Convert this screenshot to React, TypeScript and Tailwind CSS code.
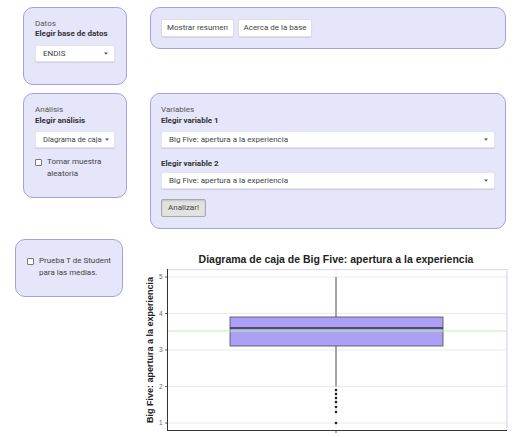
import React from "react";

const font = { fontFamily: "Roboto, 'Liberation Sans', sans-serif" };

function Caret() {
  return (
    <svg width="4" height="3" viewBox="0 0 4 3" className="shrink-0">
      <path d="M0 0.5 L4 0.5 L2 2.8 Z" fill="#555" />
    </svg>
  );
}

function Select({ value, w, size = "text-[8px]" }: { value: string; w: string; size?: string }) {
  return (
    <div
      className={`${w} ${size} h-[17px] bg-white border border-[#e4e4ec] rounded-[2px] shadow-[0_1px_1px_rgba(0,0,0,0.1)] flex items-center justify-between gap-[3px] pl-[7px] pr-[6px] text-[#444] whitespace-nowrap`}
    >
      <span>{value}</span>
      <Caret />
    </div>
  );
}

function Check({ lines }: { lines: string[] }) {
  return (
    <div className="flex items-start gap-[5px] text-[8px] leading-[12px] text-[#444]">
      <div className="mt-[3px] w-[7px] h-[7px] border border-[#777] rounded-[1px] bg-white shrink-0" />
      <div>
        {lines.map((l) => (
          <div key={l}>{l}</div>
        ))}
      </div>
    </div>
  );
}

function Panel({ className, children }: { className: string; children: React.ReactNode }) {
  return (
    <div className={`bg-[#e6e6fa] border border-[#a99de6] rounded-[10px] ${className}`}>
      {children}
    </div>
  );
}

function BoxPlot() {
  const ys = [
    { v: 5, y: 38 },
    { v: 4, y: 74.5 },
    { v: 3, y: 111 },
    { v: 2, y: 147.5 },
    { v: 1, y: 184 },
  ];
  const outliers = [151, 155, 159, 163, 168, 173, 184];
  return (
    <svg width="375" height="197" viewBox="0 0 375 197" className="block">
      <text
        x="196"
        y="24"
        textAnchor="middle"
        fontFamily="'Liberation Sans', Arial, sans-serif"
        fontWeight="bold"
        fontSize="10.5"
        fill="#222"
      >
        Diagrama de caja de Big Five: apertura a la experiencia
      </text>
      {ys.map((t) => (
        <line key={t.v} x1="27" x2="367" y1={t.y} y2={t.y} stroke="#ebebeb" strokeWidth="1" />
      ))}
      <line x1="196" x2="196" y1="30" y2="191" stroke="#ebebeb" strokeWidth="1" />
      <line x1="27" x2="367" y1="30.5" y2="30.5" stroke="#d9d6fb" strokeWidth="1" />
      <line x1="367" x2="367" y1="30" y2="191" stroke="#d9d6fb" strokeWidth="1.2" />
      <line x1="196" x2="196" y1="38" y2="78" stroke="#444" strokeWidth="0.9" />
      <line x1="196" x2="196" y1="107" y2="147.5" stroke="#444" strokeWidth="0.9" />
      <rect x="90" y="78" width="213" height="29" fill="#ab9ff6" stroke="#5a5a6a" strokeWidth="0.9" />
      <line x1="90" x2="303" y1="89" y2="89" stroke="#333" strokeWidth="1.5" />
      <line x1="27" x2="367" y1="92" y2="92" stroke="#b9f3a2" strokeWidth="1" />
      {outliers.map((y, i) => (
        <circle key={i} cx="196" cy={y} r="1.3" fill="#222" />
      ))}
      <line x1="27.5" x2="27.5" y1="30" y2="191" stroke="#333" strokeWidth="1" />
      <line x1="27" x2="367" y1="191.5" y2="191.5" stroke="#333" strokeWidth="1" />
      {ys.map((t) => (
        <g key={"t" + t.v}>
          <line x1="25" x2="27" y1={t.y} y2={t.y} stroke="#333" strokeWidth="0.8" />
          <text
            x="22.5"
            y={t.y + 2.4}
            textAnchor="end"
            fontFamily="'Liberation Sans', Arial, sans-serif"
            fontSize="6.5"
            fill="#666"
          >
            {t.v}
          </text>
        </g>
      ))}
      <line x1="196" x2="196" y1="191" y2="194" stroke="#333" strokeWidth="0.8" />
      <text
        x="0"
        y="0"
        transform="translate(12.5 111) rotate(-90)"
        textAnchor="middle"
        fontFamily="'Liberation Sans', Arial, sans-serif"
        fontWeight="bold"
        fontSize="9"
        fill="#222"
      >
        Big Five: apertura a la experiencia
      </text>
    </svg>
  );
}

export default function App() {
  return (
    <div className="w-[515px] h-[437px] bg-white overflow-hidden" style={font}>
      <div className="flex items-start pt-[7px]">
        <Panel className="ml-[23px] w-[104px] h-[78px] pl-[11px] pt-[11px]">
          <div className="text-[8px] leading-[10px] text-[#555]">Datos</div>
          <div className="text-[8px] leading-[10px] font-bold text-[#333]">Elegir base de datos</div>
          <div className="mt-[6px]">
            <Select value="ENDIS" w="w-[80px]" />
          </div>
        </Panel>
        <Panel className="ml-[23px] w-[356px] h-[42px] pl-[10px] pt-[11px] flex items-start gap-[4px]">
          <div className="w-[73px] h-[18px] bg-white border border-[#ddd] rounded-[2px] shadow-[0_1px_1px_rgba(0,0,0,0.08)] flex items-center justify-center text-[8px] text-[#444]">
            Mostrar resumen
          </div>
          <div className="w-[74px] h-[18px] bg-white border border-[#ddd] rounded-[2px] shadow-[0_1px_1px_rgba(0,0,0,0.08)] flex items-center justify-center text-[8px] text-[#444]">
            Acerca de la base
          </div>
        </Panel>
      </div>
      <div className="flex items-start mt-[8px]">
        <Panel className="ml-[23px] w-[104px] h-[105px] pl-[11px] pt-[10px]">
          <div className="text-[8px] leading-[11px] text-[#555]">Análisis</div>
          <div className="text-[8px] leading-[11px] font-bold text-[#333]">Elegir análisis</div>
          <div className="mt-[5px]">
            <Select value="Diagrama de caja" w="w-[80px]" size="text-[7.6px]" />
          </div>
          <div className="mt-[8px]">
            <Check lines={["Tomar muestra", "aleatoria"]} />
          </div>
        </Panel>
        <Panel className="ml-[23px] w-[356px] h-[136px] pl-[10px] pt-[10px]">
          <div className="text-[8px] leading-[11px] text-[#555]">Variables</div>
          <div className="text-[8px] leading-[11px] font-bold text-[#333]">Elegir variable 1</div>
          <div className="mt-[5px]">
            <Select value="Big Five: apertura a la experiencia" w="w-[334px]" />
          </div>
          <div className="mt-[10px] text-[8px] leading-[11px] font-bold text-[#333]">Elegir variable 2</div>
          <div className="mt-[3px]">
            <Select value="Big Five: apertura a la experiencia" w="w-[334px]" />
          </div>
          <div className="mt-[10px] w-[45px] h-[18px] bg-[#e2e2e2] border border-[#a8a8a8] rounded-[2px] shadow-[inset_0_1px_2px_rgba(0,0,0,0.15)] flex items-center justify-center text-[8px] text-[#444]">
            Analizar!
          </div>
        </Panel>
      </div>
      <div className="flex items-start mt-[10px]">
        <Panel className="ml-[15px] w-[108px] h-[58px] pl-[11px] pt-[15px]">
          <Check lines={["Prueba T de Student", "para las medias."]} />
        </Panel>
        <div className="ml-[17px]">
          <BoxPlot />
        </div>
      </div>
    </div>
  );
}
